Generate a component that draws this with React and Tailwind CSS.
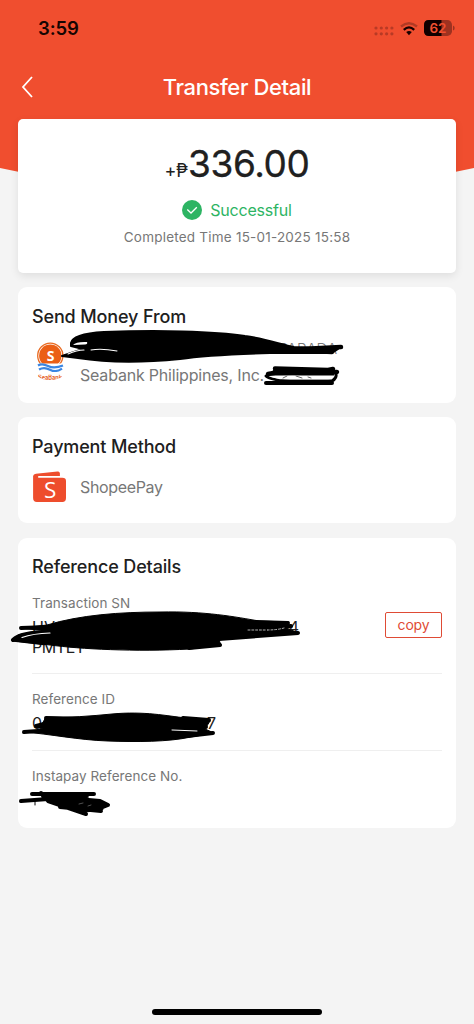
import React from "react";

function StatusBar() {
  return (
    <div className="flex h-[58px] items-center justify-between pl-[38px] pr-[19px]">
      <span className="text-[18.5px] leading-none font-semibold tracking-[-0.1px] text-[#160502] -mt-[1px]">3:59</span>
      <div className="flex items-center">
        <svg width="20" height="12" viewBox="0 0 20 12" className="mt-[4px] mr-[6px]" fill="#b83a25">
          {[2, 7.3, 12.6, 17.9].map((x) => (
            <g key={x}>
              <circle cx={x} cy="3" r="1.6" />
              <circle cx={x} cy="8.8" r="1.6" />
            </g>
          ))}
        </svg>
        <svg width="18" height="14" viewBox="0 0 18 14" fill="none" strokeWidth="2.3" className="mr-[6px]">
          <path d="M1 4.5Q9-2 17 4.5" stroke="#b13a24" />
          <path d="M3.8 7.8Q9 3 14.2 7.8" stroke="#160000" />
          <path d="M6.2 10.1Q9 7.7 11.8 10.1L9 13.2Z" fill="#160000" />
        </svg>
        <svg width="31" height="16" viewBox="0 0 31 16" className="-mt-[2px]">
          <rect width="28" height="16" rx="4.8" fill="#9e3220" />
          <path d="M4.8 0H17.5V16H4.8Q0 16 0 11.2V4.8Q0 0 4.8 0Z" fill="#100000" />
          <path d="M29 5.5Q30.7 6 30.7 8T29 10.5Z" fill="#9e3220" />
          <text x="14" y="12.8" textAnchor="middle" fontFamily="Inter, sans-serif" fontSize="13.5" fontWeight="600" fill="#f05030">62</text>
        </svg>
      </div>
    </div>
  );
}

function SeabankLogo() {
  return (
    <svg width="34" height="40" viewBox="32 342 34 40" className="mt-[3px] shrink-0">
      <circle cx="50.3" cy="355.7" r="12.6" fill="none" stroke="#e96a20" strokeWidth="1.3" />
      <circle cx="50.3" cy="355.7" r="11.2" fill="#eb5f15" />
      <text x="50.5" y="360.8" textAnchor="middle" fontFamily="Open Sans, sans-serif" fontSize="14" fontWeight="700" fill="#fff">S</text>
      <path d="M36 363.5H65V373H36Z" fill="#fff" />
      <path d="M38 365.5Q42 363 48 366T63 365.5M39 369.5Q44 366.5 50 369.7T62 368.7" fill="none" stroke="#3b86e2" strokeWidth="2.2" />
      <text x="50" y="379.5" textAnchor="middle" textLength="24" lengthAdjust="spacingAndGlyphs" fontFamily="Inter, sans-serif" fontSize="7" fontWeight="700" fill="#e7642b">SeaBank</text>
      <path d="M35 372H65V374.8H35Z" fill="#fff" />
      <path d="M35 374V382H65V374Q60 380 50 380T35 374Z" fill="#fff" />
    </svg>
  );
}

function ShopeePayLogo() {
  return (
    <svg width="34" height="32" viewBox="0 0 34 32" className="shrink-0">
      <path d="M.7 5Q1 3 3.6 2.8L25 .6Q27.2.2 27.5 2.2V5H5.8V6.7H30Q33.6 6.7 33.6 10V27Q33.6 31 30 31H4.5Q.7 31 .7 27Z" fill="#ee4d2d" transform="translate(.4)" />
      <text x="18" y="26.5" textAnchor="middle" fontFamily="Open Sans, sans-serif" fontSize="22.5" fill="#fff">S</text>
    </svg>
  );
}

function SenderMarks() {
  return (
    <svg className="pointer-events-none absolute left-0 top-0 overflow-visible" width="438" height="116" viewBox="18 287 438 116" stroke="#000" strokeLinecap="round" strokeLinejoin="round">
      <path d="M71 343C72 336 87 333 104 332C155 330 215 331 245 336C267 339 282 345 294 347L338 349L332 353L270 353C237 354 200 356 180 359C139 363 103 362 78 358L62 356L83 349L71 346Z" strokeWidth="2" />
      <path d="M292 350L332 352M301 349L341 347" strokeWidth="4.5" fill="none" />
      <path d="M73 345Q76 341.5 87 342Q88 344 85 344.5Z" fill="#fff" stroke="none" />
      <path d="M68 354Q77 350 84 350M91 350Q101 348 117 351" stroke="#fff" strokeWidth="1.1" fill="none" />
      <path d="M275 368.5L328 370L333 369M268 374Q287 370 337 372" strokeWidth="4.5" fill="none" />
      <path d="M276 369L333 370L334 375L300 375L268 375Z" strokeWidth="1" />
      <path d="M266 376Q270 380 290 381L332 381Q337 378 336 374" strokeWidth="3" fill="none" />
      <path d="M266 383L332 383" strokeWidth="4" fill="none" />
      <path d="M271 377Q288 375 312 376.5L332 376.5Q334 379 328 379.3L280 379.3Z" fill="#fff" stroke="none" />
      <path d="M283 378L287 376M296 376L302 378M308 377L311 378" stroke="#666" strokeWidth="1" fill="none" />
    </svg>
  );
}

function ReferenceMarks() {
  return (
    <svg className="pointer-events-none absolute left-0 top-0 overflow-visible" width="438" height="290" viewBox="18 538 438 290" stroke="#000" strokeLinecap="round" strokeLinejoin="round">
      <path d="M21 628L47 625C80 615 120 612 160 612C205 611 236 617 259 621L289 622L283 627L299 633L250 635L219 640L221 645L190 649C135 652 80 649 50 645L14 641L18 635L46 631Z" strokeWidth="1" />
      <path d="M21 628L50 627M13 640Q21 632 49 632M189 648L220 645M250 622L288 623M219 639L298 633M268 630L291 626" strokeWidth="4" fill="none" />
      <path d="M14 640L44 643.5" strokeWidth="3.5" fill="none" />
      <path d="M22 637.5Q33 633.5 50 633" stroke="#fff" strokeWidth="1.2" fill="none" />
      <path d="M248 630L267 630Q277 630 284 628" stroke="#ddd" strokeWidth="0.8" strokeDasharray="2 1.8" fill="none" />
      <path d="M42 724L46 717C69 718 91 716 112 714C145 711 167 716 186 718L210 721L205 729L214 733L191 737C168 742 137 742 108 741C78 740 50 734 24 732L46 730L36 727Z" strokeWidth="1" />
      <path d="M46 718L78 719M36 726L48 723M24 732L52 730M183 718L209 720M187 736L213 733M190 729L206 727" strokeWidth="4" fill="none" />
      <path d="M172 730L197 731" stroke="#fff" strokeWidth="1" fill="none" />
      <path d="M32 794L94 794M21 801L48 799L107 805M43 795L41 793M43 796L100 801L108 805L98 809L74 804M60 807L101 811M48 801L86 814M43 796L74 805L102 808" strokeWidth="4" fill="none" />
      <path d="M43 795L88 796L86 800L104 804L102 810L85 812L60 805Z" strokeWidth="1" />
      <path d="M35 801V805M82 795V799M88 795V799" strokeWidth="1" fill="none" />
      <path d="M79 804L83 803M88 806L91 805" stroke="#888" strokeWidth=".6" fill="none" />
    </svg>
  );
}

const headingClass = "text-[18px] leading-[22px] font-medium tracking-[-0.14px] text-[#202020]";
const labelClass = "text-[13.5px] leading-[18px] tracking-[0.06px] text-[#777]";

export default function App() {
  return (
    <main className="relative isolate flex h-[1024px] w-[474px] flex-col overflow-hidden bg-[#f4f4f4] font-['Inter',sans-serif]">
      <svg className="absolute left-0 top-0 -z-10" width="474" height="220" viewBox="0 0 474 220">
        <path d="M0 0H474V168Q237 220 0 168Z" fill="#f04e2f" />
      </svg>
      <StatusBar />
      <header className="grid h-[61px] grid-cols-[60px_1fr_60px] items-center">
        <svg width="12" height="22" viewBox="0 0 12 22" className="ml-[21px] -mt-[4px]" fill="none" stroke="white" strokeWidth="1.8">
          <path d="M11 1L2 11L11 21" />
        </svg>
        <h1 className="-mt-[4px] text-center text-[22px] font-medium leading-[28px] tracking-[-0.38px] text-white">Transfer Detail</h1>
      </header>

      <section className="mx-[18px] flex h-[154px] shrink-0 flex-col items-center rounded-[5px] bg-white pt-[22px] shadow-[0_3px_8px_rgba(0,0,0,0.09)]">
        <div className="flex h-[46px] items-baseline text-[#202020]">
          <span className="text-[18px] leading-[46px] tracking-[-0.2px]">+₱</span>
          <span className="text-[37px] leading-[46px] font-normal tracking-[-0.35px] [-webkit-text-stroke:0.3px_#202020]">336.00</span>
        </div>
        <div className="mt-[12px] flex h-[22px] items-center gap-[8px] text-[16px] tracking-[-0.2px] text-[#2db463]">
          <svg width="20" height="20" viewBox="0 0 20 20">
            <circle cx="10" cy="10" r="10" fill="#2db463" />
            <path d="M5.3 9.6L9 13L14.8 7.2" fill="none" stroke="#fff" strokeWidth="1.3" />
          </svg>
          <span>Successful</span>
        </div>
        <p className="mt-[7px] text-[13.5px] leading-[18px] tracking-[0.22px] text-[#777]">Completed Time 15-01-2025 15:58</p>
      </section>

      <section className="relative mx-[18px] mt-[14px] h-[116px] shrink-0 rounded-[9px] bg-white px-[14px] pt-[19px]">
        <h2 className={headingClass}>Send Money From</h2>
        <div className="mt-[11px] flex gap-[14px]">
          <SeabankLogo />
          <div className="flex w-[270px] flex-col text-[16px] leading-[20px] text-[#777]">
            <span className="mr-[13px] self-end text-[15px] font-light">PARADA</span>
            <span className="mt-[6px] whitespace-nowrap tracking-[-0.2px]">Seabank Philippines, Inc.</span>
          </div>
        </div>
        <SenderMarks />
      </section>

      <section className="mx-[18px] mt-[14px] h-[106px] shrink-0 rounded-[9px] bg-white px-[14px] pt-[19px]">
        <h2 className={headingClass}>Payment Method</h2>
        <div className="mt-[13px] flex items-center gap-[14px] text-[16px] tracking-[-0.35px] text-[#777]">
          <ShopeePayLogo />
          <span>ShopeePay</span>
        </div>
      </section>

      <section className="relative mx-[18px] mt-[15px] h-[290px] shrink-0 rounded-[9px] bg-white px-[14px] pt-[18px]">
        <h2 className={headingClass}>Reference Details</h2>
        <div className="mt-[16px] flex h-[80px] justify-between border-b border-[#efefef]">
          <div className="w-[267px]">
            <p className={labelClass}>Transaction SN</p>
            <div className="mt-[5px] flex justify-between text-[16px] leading-[20px] text-[#202020]">
              <span>HV</span>
              <span>4</span>
            </div>
            <p className="text-[16px] leading-[20px] tracking-[-0.4px] text-[#202020]">PMTET</p>
          </div>
          <button className="mt-[18px] h-[26px] w-[57px] rounded-[2px] border border-[#df4b35] text-[14px] leading-[24px] tracking-[-0.2px] text-[#df4b35]">copy</button>
        </div>
        <div className="flex h-[77px] flex-col border-b border-[#efefef] pt-[16px]">
          <p className={labelClass}>Reference ID</p>
          <div className="mt-[5px] flex w-[184px] justify-between text-[16px] leading-[20px] text-[#202020]">
            <span>0</span>
            <span>7</span>
          </div>
        </div>
        <p className={"pt-[16px] " + labelClass}>Instapay Reference No.</p>
        <ReferenceMarks />
      </section>

      <div className="mx-auto mb-[9px] mt-auto h-[6px] w-[170px] shrink-0 rounded-full bg-black" />
    </main>
  );
}
